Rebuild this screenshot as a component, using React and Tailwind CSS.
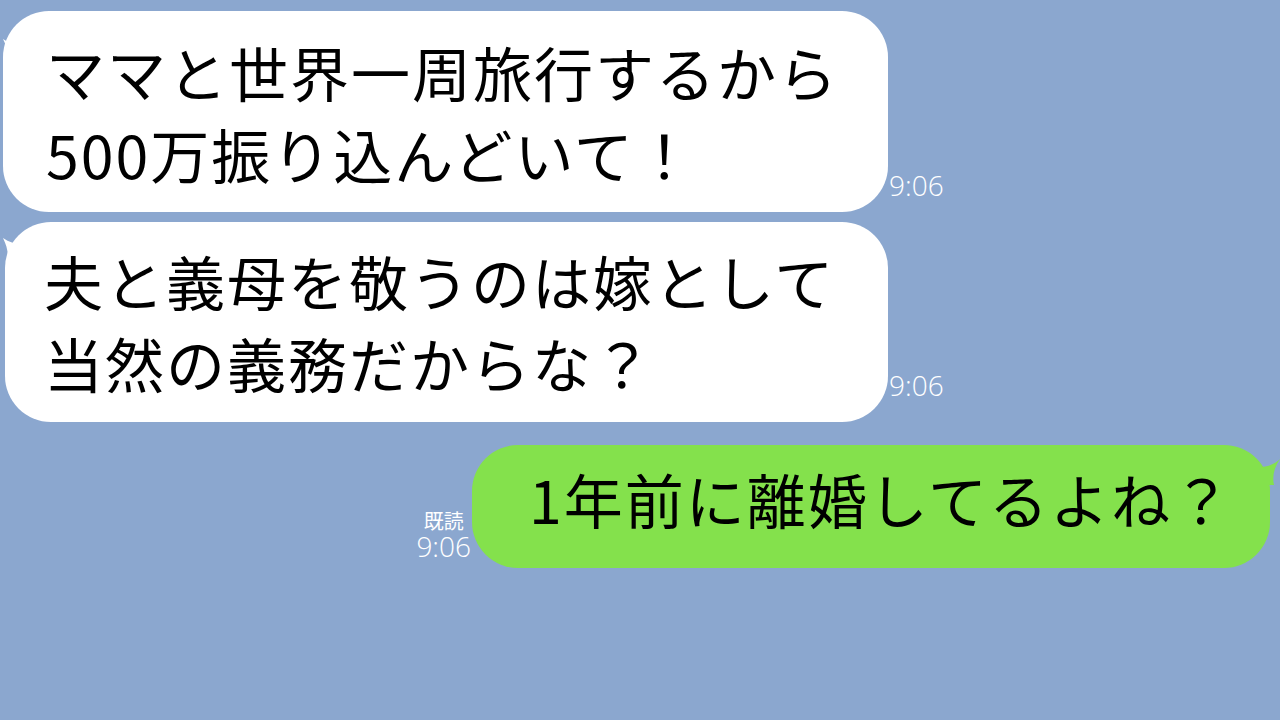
export default function App() {
  const jp = { fontFamily: '"Noto Sans CJK JP", "Noto Sans", sans-serif' };
  const tm = { fontFamily: '"Open Sans", "Noto Sans", sans-serif' };
  return (
    <div className="w-[1280px] h-[720px] bg-[#8ba7cf] overflow-hidden flex flex-col" style={jp}>
      <div className="flex items-end pl-[3px] pt-[11px]">
        <div className="relative bg-white w-[885px] h-[201px] rounded-[46px] pl-[43px] pt-[20px] text-[59px] leading-[82px] tracking-[2px] text-black">
          <svg className="absolute left-[-2px] top-[22px]" width="20" height="30" viewBox="0 0 20 30">
            <path d="M2 6 C8 10 14 12 20 12 L20 30 L6 30 C8 22 6 14 2 6 Z" fill="#fff" />
          </svg>
          <div className="relative">ママと世界一周旅行するから</div>
          <div className="relative">500万振り込んどいて！</div>
        </div>
        <div className="text-white text-[28px] leading-none pl-[1px] pb-[13px] font-light" style={tm}>9:06</div>
      </div>
      <div className="flex items-end pl-[5px] pt-[10px]">
        <div className="relative bg-white w-[883px] h-[200px] rounded-[46px] pl-[39px] pt-[18px] text-[59px] leading-[82px] tracking-[2px] text-black">
          <svg className="absolute left-[-4px] top-[10px]" width="20" height="30" viewBox="0 0 20 30">
            <path d="M2 6 C8 10 14 12 20 12 L20 30 L6 30 C8 22 6 14 2 6 Z" fill="#fff" />
          </svg>
          <div className="relative">夫と義母を敬うのは嫁として</div>
          <div className="relative">当然の義務だからな？</div>
        </div>
        <div className="text-white text-[28px] leading-none pl-[1px] pb-[23px] font-light" style={tm}>9:06</div>
      </div>
      <div className="flex items-end justify-end pr-[10px] pt-[23px]">
        <div className="flex flex-col items-center text-white pr-[1px] pb-[8px]">
          <div className="text-[20px] leading-[22px]" style={jp}>既読</div>
          <div className="text-[28px] leading-[28px] font-light" style={tm}>9:06</div>
        </div>
        <div className="relative bg-[#84e14c] w-[798px] h-[123px] rounded-[46px] pl-[57px] pt-[14px] text-[59px] leading-[80px] tracking-[2px] text-black">
          <svg className="absolute right-[-12px] top-[10px]" width="24" height="30" viewBox="0 0 24 30">
            <path d="M22 4 C16 10 8 12 0 12 L0 30 L16 30 C14 22 16 12 22 4 Z" fill="#84e14c" />
          </svg>
          <div className="relative">1年前に離婚してるよね？</div>
        </div>
      </div>
    </div>
  );
}
